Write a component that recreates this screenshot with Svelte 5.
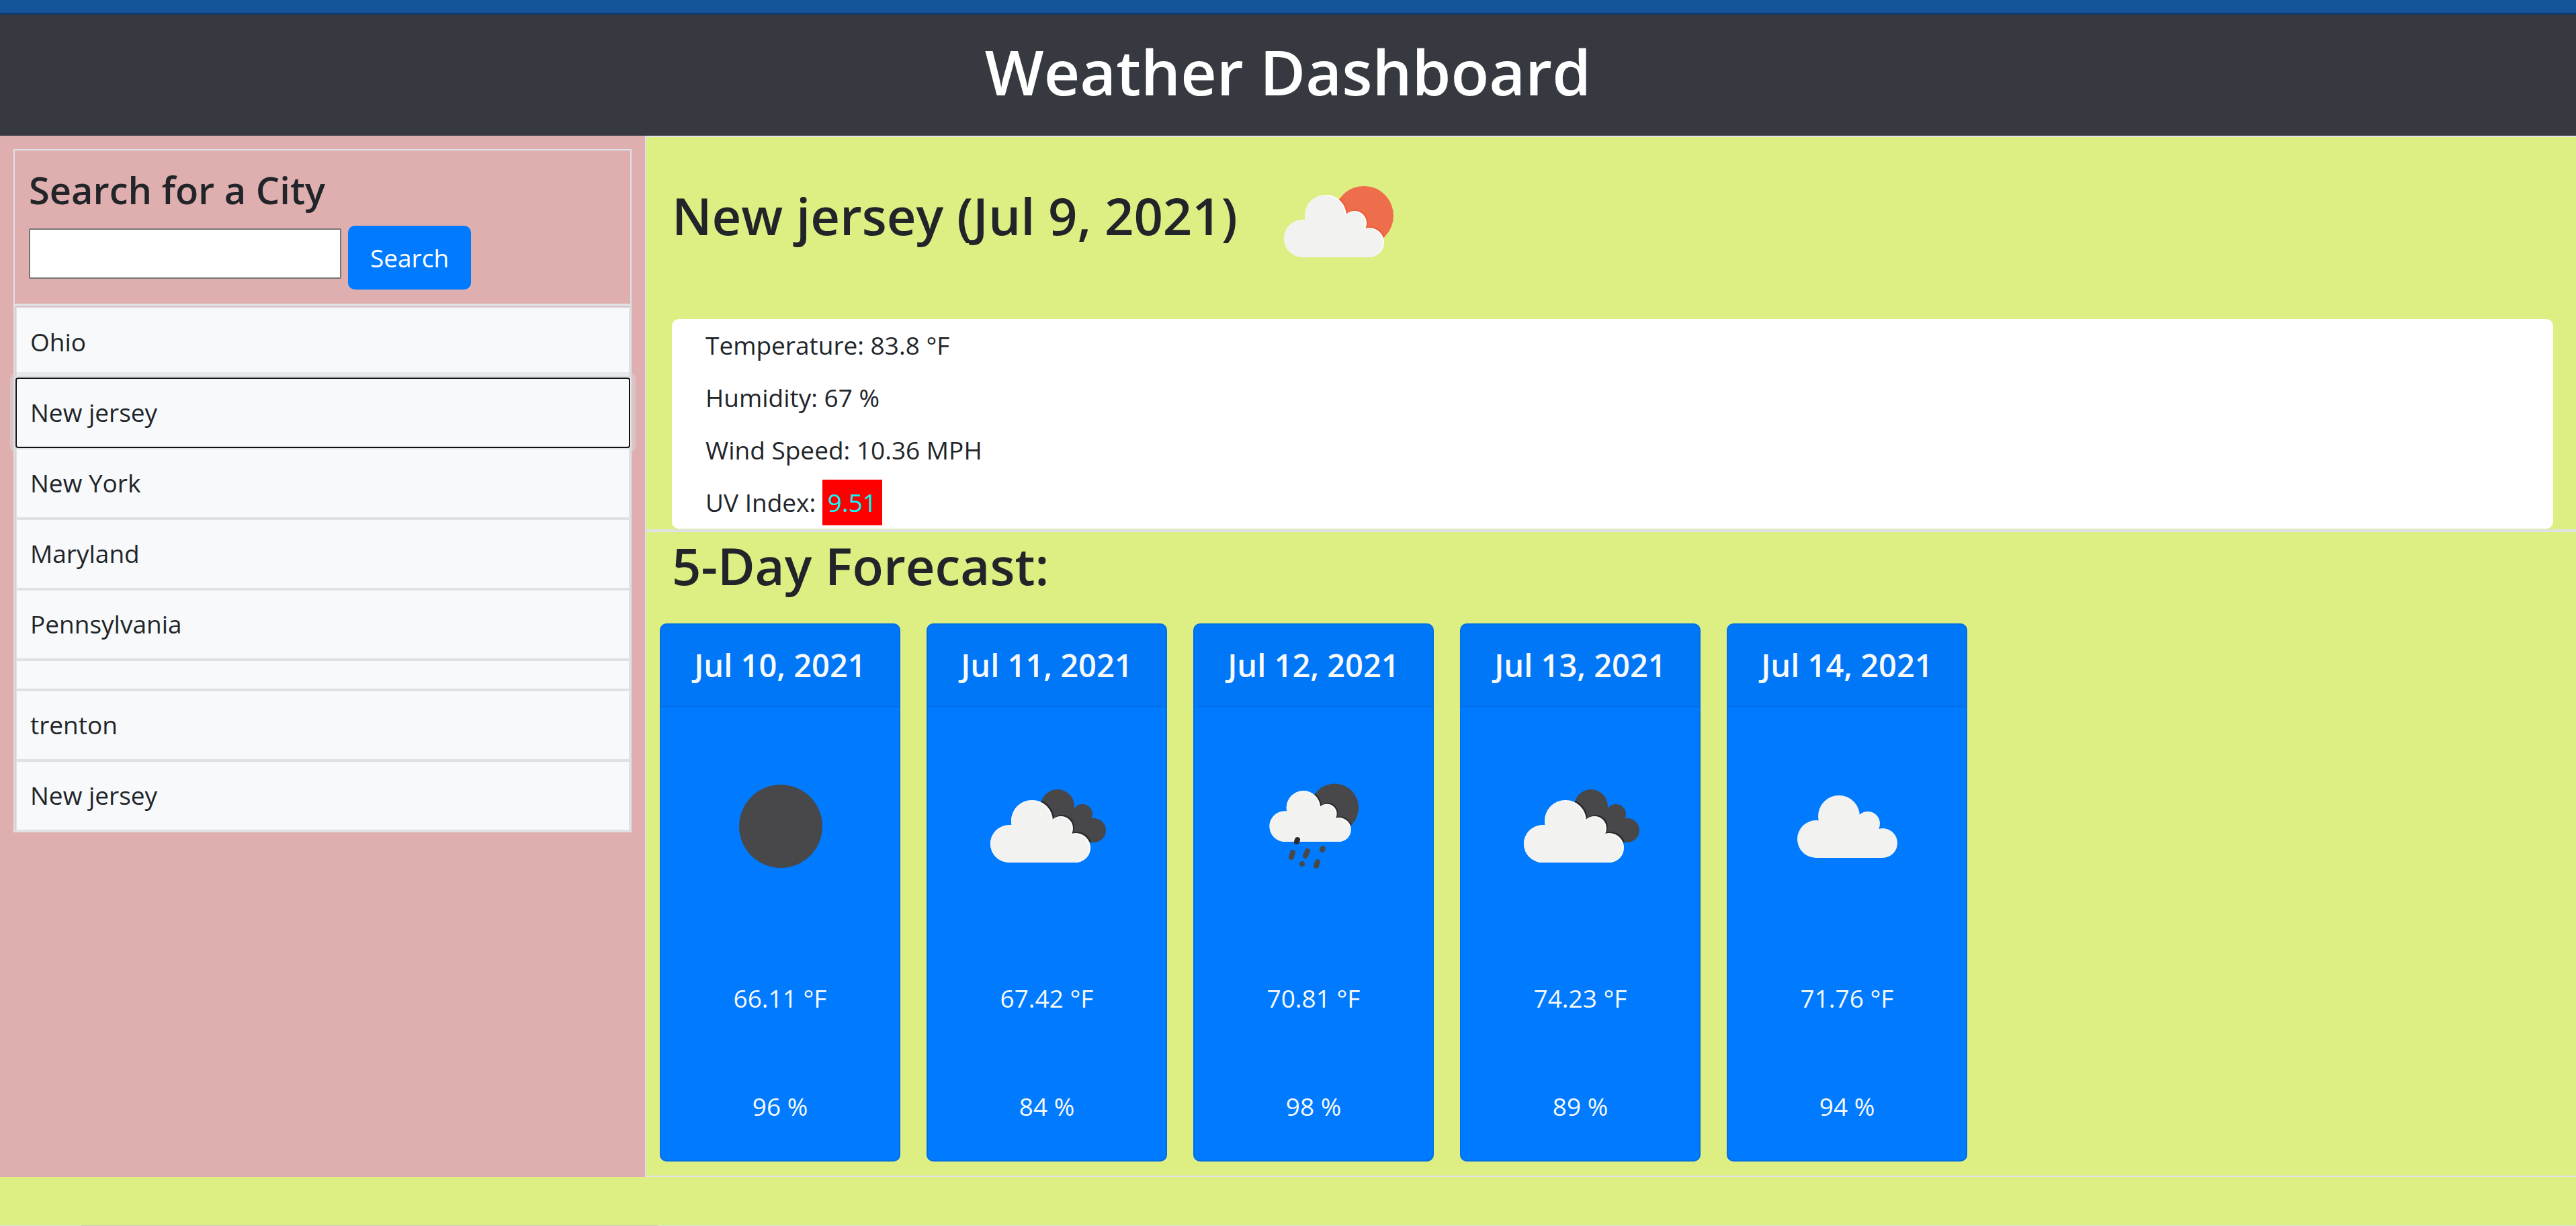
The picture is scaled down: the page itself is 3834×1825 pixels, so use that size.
<script>
  let query = $state('');
  let selected = $state(1);

  const cities = ['Ohio', 'New jersey', 'New York', 'Maryland', 'Pennsylvania', '', 'trenton', 'New jersey'];

  const forecast = [
    { date: 'Jul 10, 2021', icon: 'clear', label: 'Clear sky', temp: '66.11 °F', humidity: '96 %' },
    { date: 'Jul 11, 2021', icon: 'broken', label: 'Broken clouds', temp: '67.42 °F', humidity: '84 %' },
    { date: 'Jul 12, 2021', icon: 'rain', label: 'Rain', temp: '70.81 °F', humidity: '98 %' },
    { date: 'Jul 13, 2021', icon: 'broken', label: 'Broken clouds', temp: '74.23 °F', humidity: '89 %' },
    { date: 'Jul 14, 2021', icon: 'cloud', label: 'Scattered clouds', temp: '71.76 °F', humidity: '94 %' }
  ];
</script>

{#snippet cloud()}
  <circle cx="69" cy="151" r="28" />
  <circle cx="103" cy="117" r="31" />
  <circle cx="146" cy="128" r="18" />
  <circle cx="168" cy="157" r="22" />
  <path d="M69 179V140L90 120L118 110L135 120L168 140V179Z" />
{/snippet}

{#snippet weatherIcon(kind, label, id)}
  <svg class="icon" viewBox="0 0 250 250" role="img" aria-label={label}>
    <defs>
      <clipPath id="{id}-cloud">{@render cloud()}</clipPath>
      <clipPath id="{id}-back">
        {#if kind === 'broken'}
          <circle cx="141" cy="95" r="25" />
          <circle cx="178" cy="107" r="15" />
          <circle cx="195" cy="131" r="18" />
          <path d="M141 95L160 96L178 107L185 120L195 131V149H150Z" />
        {:else}
          <circle cx="160" cy="117" r="44" />
        {/if}
      </clipPath>
    </defs>
    {#if kind === 'clear'}
      <circle cx="126" cy="125" r="62" fill="#48484a" />
    {:else}
      <g transform={kind === 'broken' ? 'translate(0 0)' : kind === 'rain' ? 'translate(26 2) scale(.815)' : 'translate(10 -7)'}>
        {#if kind === 'broken'}
          <g fill="#48484a">
            <circle cx="141" cy="95" r="25" />
            <circle cx="178" cy="107" r="15" />
            <circle cx="195" cy="131" r="18" />
            <path d="M141 95L160 96L178 107L185 120L195 131V149H150Z" />
          </g>
        {:else if kind !== 'cloud'}
          <circle cx="160" cy="117" r="44" fill={kind === 'sun' ? '#ee6e4b' : '#48484a'} />
        {/if}
        {#if kind !== 'cloud'}
          <g clip-path="url(#{id}-back)">
            <g transform="translate(2 -2)" fill={kind === 'sun' ? '#e96040' : '#2c2c2e'}>{@render cloud()}</g>
          </g>
        {/if}
        <g fill={kind === 'cloud' ? '#f2f2f0' : '#ffffff'}>{@render cloud()}</g>
        {#if kind !== 'cloud'}
          <g clip-path="url(#{id}-cloud)">
            <g transform="translate(-2 1)" fill="#f2f2f0">{@render cloud()}</g>
          </g>
        {/if}
      </g>
      {#if kind === 'rain'}
        <g stroke="#48484a" stroke-width="8" stroke-linecap="round">
          <path d="M101 145L100 148" stroke="#2c2c2e" />
          <path d="M94 164L92 171M116 162L113 169M139 158L138 160M108 181L108 181M131 178L129 184" />
        </g>
      {/if}
    {/if}
  </svg>
{/snippet}

<div class="page">
  <div class="strip"></div>
  <header class="masthead"><h1>Weather Dashboard</h1></header>

  <div class="columns">
    <aside class="sidebar">
      <form class="search" onsubmit={(event) => event.preventDefault()}>
        <h4><label for="city">Search for a City</label></h4>
        <div class="search-row">
          <input id="city" type="text" bind:value={query} />
          <button class="go" type="submit">Search</button>
        </div>
      </form>
      <div class="history">
        {#each cities as city, i}
          <button
            class="city"
            class:selected={i === selected}
            type="button"
            aria-label={city || 'Unnamed city'}
            onclick={() => (selected = i)}>{city}</button>
        {/each}
      </div>
    </aside>

    <main class="content">
      <section class="today">
        <div class="today-head">
          <h2>New jersey (Jul 9, 2021)</h2>
          {@render weatherIcon('sun', 'Few clouds', 'today')}
        </div>
        <div class="readings">
          <p>Temperature: 83.8 °F</p>
          <p>Humidity: 67 %</p>
          <p>Wind Speed: 10.36 MPH</p>
          <p>UV Index: <span class="uv">9.51</span></p>
        </div>
      </section>

      <section class="forecast">
        <h2>5-Day Forecast:</h2>
        <div class="cards">
          {#each forecast as day, i}
            <article class="card">
              <h5>{day.date}</h5>
              <div class="card-body">
                {@render weatherIcon(day.icon, day.label, `day${i}`)}
                <p>{day.temp}</p>
                <p>{day.humidity}</p>
              </div>
            </article>
          {/each}
        </div>
      </section>
    </main>
  </div>

  <div class="edge"></div>
</div>

<style>
  :global(body) {
    background: #ddee82;
  }

  .page {
    box-sizing: border-box;
    display: flex;
    flex-direction: column;
    min-height: 100vh;
    color: #212529;
    font-family: 'Open Sans', 'Noto Sans', sans-serif;
    font-size: 37px;
    line-height: 60px;
  }

  .page * {
    box-sizing: border-box;
  }

  h1, h2, h4, h5, p {
    margin: 0;
  }

  h1, h2, h4, h5 {
    font-weight: 600;
  }

  .strip {
    height: 22px;
    background: #14549a;
    border-bottom: 3px solid #133b68;
  }

  .masthead {
    padding: 24px 20px 36px;
    background: #363940;
    color: #ffffff;
    text-align: center;
  }

  h1 {
    font-size: 93px;
    line-height: 120px;
  }

  .columns {
    display: grid;
    grid-template-columns: 960px minmax(0, 1fr);
  }

  .sidebar {
    padding: 20px;
    background: #dfafaf;
  }

  .search {
    padding: 22px 21px 20px;
    border: 2px solid #dee2e6;
  }

  h4 {
    padding-bottom: 18px;
    font-size: 56px;
    line-height: 72px;
  }

  .search-row {
    display: flex;
    align-items: flex-start;
    gap: 10px;
    height: 96px;
  }

  input {
    width: 465px;
    height: 75px;
    margin: 4px 0 0;
    padding: 2px 5px;
    border: 2px solid #767676;
    border-radius: 2px;
    background: #ffffff;
    font: inherit;
  }

  button {
    margin: 0;
    font: inherit;
  }

  .go {
    padding: 18px 33px 17px;
    border: 0;
    border-radius: 10px;
    background: #007bff;
    color: #ffffff;
  }

  .history {
    display: flex;
    flex-direction: column;
    padding: 1px 0 0 1px;
    border: 2px solid #dee2e6;
  }

  .city {
    position: relative;
    padding: 20px 20px 21px;
    border: 2px solid #dee2e6;
    border-radius: 0;
    background: #f8f9fa;
    color: #212529;
    text-align: left;
  }

  .city.selected {
    border: 2px solid #101010;
    border-radius: 4px;
    box-shadow: 0 0 0 1px #ffffff, 0 0 0 8px rgba(216, 217, 219, 0.5);
  }

  .content {
    border-left: 2px solid #dee2e6;
  }

  .today {
    padding: 7px 34px 1px 38px;
    border-top: 2px solid #dee2e6;
    border-bottom: 2px solid #dee2e6;
  }

  .today-head {
    display: flex;
    align-items: flex-start;
    gap: 18px;
    padding-bottom: 14px;
  }

  h2 {
    font-size: 76px;
    line-height: 96px;
  }

  .today-head h2 {
    padding-top: 62px;
  }

  .icon {
    display: block;
    flex: none;
    width: 250px;
    height: 250px;
  }

  .readings {
    display: grid;
    grid-auto-rows: 78px;
    align-items: center;
    padding-left: 50px;
    border-radius: 10px;
    background: #ffffff;
  }

  .uv {
    display: inline-block;
    padding: 4px 8px;
    background: #ff0000;
    color: #00ffff;
  }

  .forecast {
    padding: 2px 20px 21px;
    border-top: 2px solid #dee2e6;
    border-bottom: 2px solid #dee2e6;
  }

  .forecast h2 {
    padding: 0 18px 38px;
  }

  .cards {
    display: flex;
    gap: 39px;
  }

  .card {
    width: 358px;
    border: 2px solid #006fe6;
    border-radius: 10px;
    background: #007bff;
    color: #f8f9fa;
    text-align: center;
    overflow: hidden;
  }

  h5 {
    padding: 30px 20px;
    border-bottom: 2px solid #006fe6;
    background: #0077f7;
    font-size: 47px;
    line-height: 61px;
  }

  .card-body {
    display: flex;
    flex-direction: column;
    align-items: center;
    gap: 101px;
    padding: 52px 20px 50px;
  }

  .edge {
    height: 1px;
    margin-top: auto;
    background: linear-gradient(90deg, #cfe3dc 120px, #c9c8c6 120px 980px, #cfe3dc 980px);
  }
</style>
